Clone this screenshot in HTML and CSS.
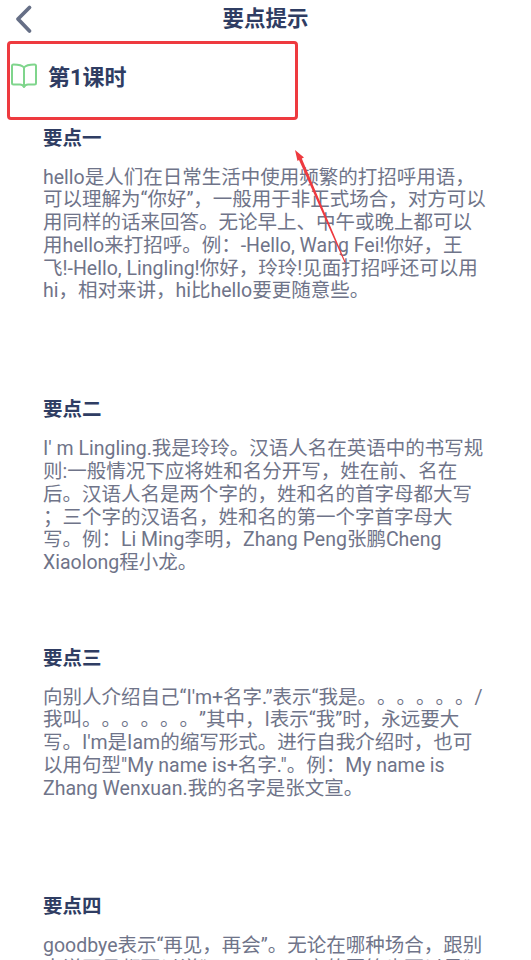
FILE: index.html
```html
<!DOCTYPE html>
<html lang="zh-CN">
<head>
<meta charset="utf-8">
<title>要点提示</title>
<link rel="stylesheet" href="styles.css">
</head>
<body>
<div class="page">
  <header class="topbar">
    <svg class="back" width="20" height="30" viewBox="0 0 20 30" aria-hidden="true"><path d="M16.500 3.500 5 15l11.500 12" fill="none" stroke="#666f86" stroke-width="3.800" stroke-linecap="round" stroke-linejoin="round"/></svg>
    <h1 class="title">要点提示</h1>
  </header>
  <div class="lesson">
    <svg class="book" width="26" height="26" viewBox="0 0 26 26" aria-hidden="true"><path d="M13 4.500C11 2 8 1.500 2.500 1.500c-1 0-1.500.5-1.500 1.500v17c0 1 .5 1.500 1.500 1.500H9c1.500 0 3 .5 4 2.500 1-2 2.500-2.500 4-2.500h6.500c1 0 1.500-.5 1.500-1.500V3c0-1-.5-1.500-1.500-1.500C18 1.500 15 2 13 4.500Zm0 0V24" fill="none" stroke="#7fd58c" stroke-width="2" stroke-linejoin="round"/></svg>
    <h2 class="lesson-name">第1课时</h2>
  </div>
  <section class="point p1">
    <h3 class="point-title">要点一</h3>
    <p class="point-text">hello是人们在日常生活中使用频繁的打招呼用语，<br>可以理解为“你好”，一般用于非正式场合，对方可以<br>用同样的话来回答。无论早上、中午或晚上都可以<br>用hello来打招呼。例：-Hello, Wang Fei!你好，王<br>飞!-Hello, Lingling!你好，玲玲!见面打招呼还可以用<br>hi，相对来讲，hi比hello要更随意些。</p>
  </section>
  <section class="point p2">
    <h3 class="point-title">要点二</h3>
    <p class="point-text">I' m Lingling.我是玲玲。汉语人名在英语中的书写规<br>则:一般情况下应将姓和名分开写，姓在前、名在<br>后。汉语人名是两个字的，姓和名的首字母都大写<br>；三个字的汉语名，姓和名的第一个字首字母大<br>写。例：Li Ming李明，Zhang Peng张鹏Cheng<br>Xiaolong程小龙。</p>
  </section>
  <section class="point p3">
    <h3 class="point-title">要点三</h3>
    <p class="point-text">向别人介绍自己“I'm+名字.”表示“我是。。。。。。/<br>我叫。。。。。。”其中，I表示“我”时，永远要大<br>写。I'm是Iam的缩写形式。进行自我介绍时，也可<br>以用句型"My name is+名字."。例：My name is<br>Zhang Wenxuan.我的名字是张文宣。</p>
  </section>
  <section class="point p4">
    <h3 class="point-title">要点四</h3>
    <p class="point-text">goodbye表示“再见，再会”。无论在哪种场合，跟别<br>人说再见都可以说“goodbye”，它的回答也可以是“</p>
  </section>
  <div class="red-box"></div>
  <svg class="red-arrow" width="60" height="120" viewBox="0 0 60 120" aria-hidden="true"><path d="M2 1 11 8.500 8.800 9.500 52.500 113 51.500 113.500 6 11 4.500 12Z" fill="#ee3a3f"/></svg>
</div>
</body>
</html>
```
FILE: styles.css
```css
* { box-sizing: border-box; }
html, body { margin: 0; padding: 0; background: #fff; }
.page {
  position: relative;
  width: 531px;
  height: 960px;
  overflow: hidden;
  font-family: Roboto, "Noto Sans CJK SC", sans-serif;
  color: #6f7489;
  text-spacing-trim: space-all;
}
.topbar {
  position: relative;
  display: flex;
  justify-content: center;
  align-items: center;
  height: 38px;
}
.back { position: absolute; left: 13px; top: 4px; }
.title { margin: 0; font-size: 21.500px; font-weight: 700; line-height: 30px; color: #2f3d63; }
.lesson {
  display: flex;
  align-items: center;
  gap: 11px;
  height: 80px;
  padding-left: 11px;
}
.book { margin-top: -4px; }
.lesson-name { margin: 0; font-size: 22px; font-weight: 700; line-height: 30px; color: #2f3d63; }
.point { padding: 0 30px 0 43px; }
.p1 { margin-top: 8.500px; }
.p2 { margin-top: 95px; }
.p3 { margin-top: 71.500px; }
.p4 { margin-top: 94.500px; }
.point-title { margin: 0 0 16px; font-size: 19.500px; line-height: 24px; font-weight: 700; color: #2f3d63; }
.point-text { margin: 0; font-size: 19.500px; line-height: 22.800px; white-space: nowrap; }
.red-box {
  position: absolute;
  left: 7px;
  top: 41px;
  width: 291px;
  height: 79px;
  border: 3px solid #ee3a3f;
  border-radius: 4px;
}
.red-arrow { position: absolute; left: 293px; top: 149px; }
```
